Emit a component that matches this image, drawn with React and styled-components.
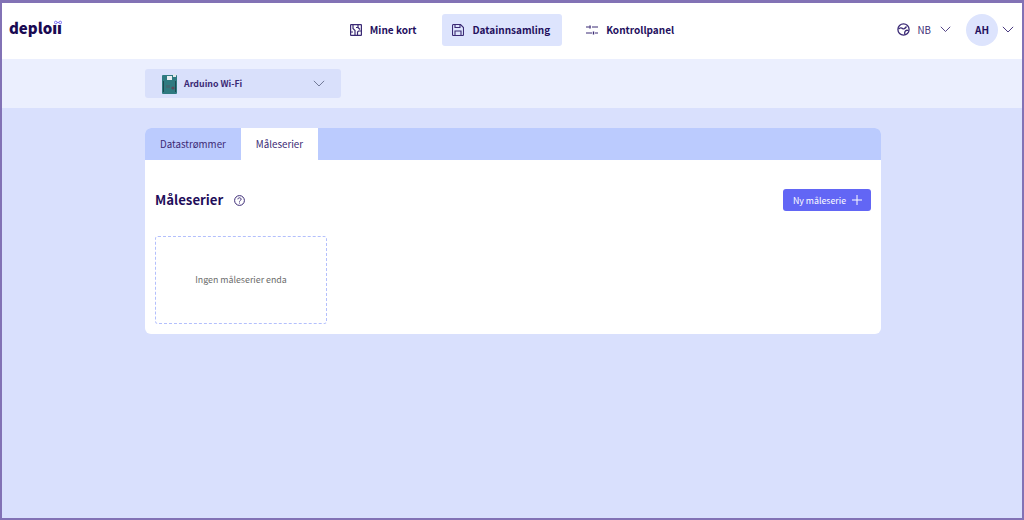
import React from "react";
import styled, { createGlobalStyle } from "styled-components";

const Sans = `"Noto Sans CJK SC", "Noto Sans", sans-serif`;
const Global = createGlobalStyle`
  html, body { margin: 0; padding: 0; }
  body { font-family: ${Sans}; background: #d9e0fd; }
  * { box-sizing: border-box; }
`;
const Frame = styled.div`
  width: 1024px; height: 520px; border: 2px solid #8272b5; border-top-width: 3px;
  background: #d9e0fd; display: flex; flex-direction: column; overflow: hidden;
`;
const Header = styled.header`
  height: 56px; background: #fff; display: grid; grid-template-columns: 1fr auto 1fr; align-items: center; padding: 0 8px 3px; flex: none;
`;
const Logo = styled.div`
  position: relative; justify-self: start; font: 900 15px/20px ${Sans}; color: #1a0a52; margin: -3px 0 0 -1px;
`;
const LogoDots = styled.svg`
  position: absolute; right: 0px; top: 2px; width: 8px; height: 5px;
`;
const Nav = styled.nav`
  display: flex; gap: 14px; align-items: center; margin-left: 2px;
`;
const NavItem = styled.div`
  height: 32px; padding: 0 12px 0 10px; display: flex; align-items: center; gap: 8px; border-radius: 3px;
  background: ${p => (p.$active ? "#dde4fd" : "transparent")};
  color: #24105e; font-size: 10px; font-weight: 700; white-space: nowrap;
`;
const Right = styled.div`
  justify-self: end; display: flex; align-items: center; color: #3b2a75;
`;
const Lang = styled.div`
  display: flex; align-items: center; font-size: 9.75px; margin-right: 15px;
  span { margin: 0 9px 0 8px; }
`;
const Avatar = styled.div`
  width: 32px; height: 32px; border-radius: 50%; background: #dde4fd; display: flex; align-items: center; justify-content: center;
  font-size: 10px; font-weight: 700; color: #24105e; margin-right: 4px;
`;
const SubBar = styled.div`
  height: 49px; background: #ebeffe; flex: none; padding: 10px 0 0 143px;
`;
const Select = styled.div`
  width: 196px; height: 29px; background: #d9e0fb; border-radius: 3px; display: flex; align-items: center; padding: 0 16px 0 17px;
  color: #3b2a75; font-size: 8.8px; font-weight: 700;
  span { margin-left: 6px; flex: 1; padding-bottom: 1px; }
`;
const Main = styled.main`
  flex: 1; padding: 20px 141px 0 143px;
`;
const Card = styled.section`
  background: #fff; border-radius: 6px; overflow: hidden; height: 206px;
`;
const Tabs = styled.div`
  height: 32px; background: #bbcbfe; display: flex;
`;
const Tab = styled.div`
  height: 32px; padding: 0 15px; display: flex; align-items: center; font-size: 9.75px; color: #3b2a75;
  background: ${p => (p.$active ? "#fff" : "transparent")};
`;
const Body = styled.div`
  padding: 29px 10px 10px;
`;
const TitleRow = styled.div`
  display: flex; align-items: center; height: 22px; margin-bottom: 25px;
`;
const Title = styled.h2`
  margin: 0 11px 2px 0; font-size: 13.2px; font-weight: 700; color: #1f0d5a;
`;
const Spacer = styled.div`flex: 1;`;
const Button = styled.button`
  height: 22px; width: 88px; border: 0; border-radius: 3px; background: #6266f5; color: #fff; font: 400 8.8px ${Sans};
  display: flex; align-items: center; justify-content: center; gap: 6px; padding: 0 0 0 1px;
`;
const Empty = styled.div`
  width: 172px; height: 88px; border: 1px dashed #b3bffc; border-radius: 3px; display: flex; align-items: center; justify-content: center;
  color: #6b6b6b; font-size: 8.85px; padding-bottom: 2px;
`;
const Chevron = ({ size = 14, color = "#3b2a75" }) => (
  <svg width={size} height={size * 0.6} viewBox="0 0 14 8.4" fill="none" stroke={color} strokeWidth="1.1">
    <path d="M1 1l6 6 6-6" />
  </svg>
);
const IconBoard = () => (
  <svg width="12" height="12" viewBox="0 0 12 12" fill="none" stroke="#3b2a75" strokeWidth="1.2">
    <rect x=".6" y=".6" width="10.8" height="10.8" rx=".5" />
    <path d="M3 .5v4l2 2v5M8 .5v3h-2M8 3.5l2 2M11.5 7h-3l-1 1v3.5M.5 8h2.5" />
  </svg>
);
const IconSave = () => (
  <svg width="12" height="12" viewBox="0 0 12 12" fill="none" stroke="#3b2a75" strokeWidth="1.1">
    <path d="M1.5.5h7l3 3v7a1 1 0 0 1-1 1h-9a1 1 0 0 1-1-1v-9a1 1 0 0 1 1-1z" />
    <path d="M3 11.5V7h6v4.5M3 .5v3h5v-3" />
  </svg>
);
const IconSliders = () => (
  <svg width="12" height="10" viewBox="0 0 12 10" fill="none" stroke="#3b2a75" strokeWidth="1">
    <path d="M0 2h3M6 2h6M0 8h6M9 8h3" />
    <path d="M4 .5v3M7.5 6.5v3" strokeWidth="1.4" />
  </svg>
);
const IconGlobe = () => (
  <svg width="13" height="13" viewBox="0 0 13 13" fill="none" stroke="#3b2a75" strokeWidth="1.3">
    <circle cx="6.5" cy="6.5" r="5.6" />
    <path d="M1.5 6c1.5-1.5 3-1.5 4-.5s2.5 0 4-2M11.5 7.5c-1.500-.5-3 0-3.500 1s-.5 2 0 3" />
  </svg>
);
const IconHelp = () => (
  <svg width="11" height="11" viewBox="0 0 11 11" fill="none" stroke="#3b2a75" strokeWidth="1">
    <circle cx="5.5" cy="5.5" r="4.9" />
    <path d="M3.9 4.3c0-2 3.2-2 3.2 0 0 1.2-1.6 1.2-1.6 2.3" />
    <path d="M5.5 7.6v.9" />
  </svg>
);
const IconPlus = () => (
  <svg width="10" height="10" viewBox="0 0 10 10" stroke="#fff" strokeWidth="1" fill="none">
    <path d="M5 0v10M0 5h10" />
  </svg>
);
const IconArduino = () => (
  <svg width="16" height="20" viewBox="0 0 16 20">
    <rect x="0" y="1" width="15" height="19" rx="1" fill="#2f7a80" />
    <rect x="5" y="2" width="5" height="4" fill="#e8eef0" />
    <rect x="11" y="0" width="3" height="3" fill="#dfe6ea" />
    <rect x="1" y="7" width="1" height="11" fill="#1d4a52" />
    <rect x="13" y="7" width="1" height="11" fill="#1d4a52" />
    <circle cx="11" cy="14" r="1.6" fill="#5a4a5a" />
    <rect x="4" y="11" width="4" height="3" fill="#3f6a74" />
  </svg>
);

export default function App() {
  return (
    <>
      <Global />
      <Frame>
        <Header>
          <Logo>
            deploıı
            <LogoDots viewBox="0 0 9 5" fill="none" stroke="#6a5cf0" strokeWidth="1">
              <circle cx="2" cy="2.5" r="1.5" />
              <circle cx="7" cy="2.5" r="1.5" />
              <path d="M3.5 2.5h2" />
            </LogoDots>
          </Logo>
          <Nav>
            <NavItem><IconBoard />Mine kort</NavItem>
            <NavItem $active><IconSave />Datainnsamling</NavItem>
            <NavItem><IconSliders />Kontrollpanel</NavItem>
          </Nav>
          <Right>
            <Lang><IconGlobe /><span>NB</span><Chevron size={11} /></Lang>
            <Avatar>AH</Avatar>
            <Chevron size={12} />
          </Right>
        </Header>
        <SubBar>
          <Select><IconArduino /><span>Arduino Wi-Fi</span><Chevron size={12} color="#6b7290" /></Select>
        </SubBar>
        <Main>
          <Card>
            <Tabs>
              <Tab>Datastrømmer</Tab>
              <Tab $active>Måleserier</Tab>
            </Tabs>
            <Body>
              <TitleRow>
                <Title>Måleserier</Title>
                <IconHelp />
                <Spacer />
                <Button>Ny måleserie<IconPlus /></Button>
              </TitleRow>
              <Empty>Ingen måleserier enda</Empty>
            </Body>
          </Card>
        </Main>
      </Frame>
    </>
  );
}
